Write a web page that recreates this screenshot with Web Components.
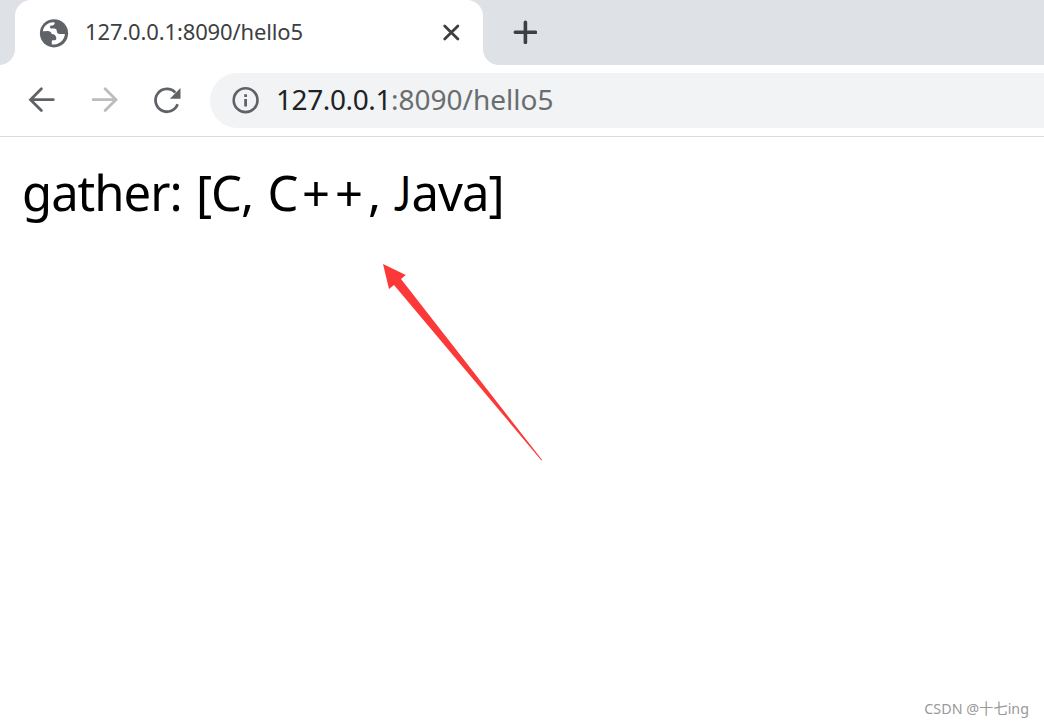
<!DOCTYPE html>
<html lang="en">
<head>
<meta charset="utf-8">
<title>127.0.0.1:8090/hello5</title>
<style>
    body {
        margin: 0;
        background: #fff;
        font-family: "Noto Sans", "Open Sans", "Noto Sans CJK SC", sans-serif;
    }

    .plus {
        margin-left: 4.5px;
        letter-spacing: 5px;
    }

    .cap {
        display: inline-block;
        width: 18px;
        margin-left: -1px;
        font-family: Lato, sans-serif;
        transform: scaleX(0.82);
        transform-origin: left;
    }
</style>
</head>
<body>
<browser-window>
    <browser-tab slot="tabs">127.0.0.1:8090/hello5</browser-tab>
    <browser-toolbar slot="toolbar">
        <address-bar slot="address" host="127.0.0.1">:8090/hello5</address-bar>
    </browser-toolbar>
    <page-view>gather: [C, C<span class="plus">++</span>, <span class="cap">J</span>ava]</page-view>
</browser-window>

<script>
class BrowserWindow extends HTMLElement {
    connectedCallback() {
        this.attachShadow({ mode: 'open' });
        this.shadowRoot.innerHTML = `
            <style>
                :host {
                    display: flex;
                    flex-direction: column;
                    height: 726px;
                    overflow: hidden;
                }

                .strip {
                    display: flex;
                    height: 65px;
                    padding-left: 15px;
                    background: #dee1e6;
                }

                .add {
                    display: block;
                    width: 24px;
                    height: 24px;
                    margin: 20px 0 0 30px;
                }
            </style>
            <div class="strip">
                <slot name="tabs"></slot>
                <svg class="add" viewBox="0 0 24 24" stroke="#3c4043" stroke-width="3.6" stroke-linecap="round">
                    <path d="M2.3 12.3h20.2M12.4 2.2v20.2"/>
                </svg>
            </div>
            <slot name="toolbar"></slot>
            <slot></slot>
        `;
    }
}

class BrowserTab extends HTMLElement {
    connectedCallback() {
        this.attachShadow({ mode: 'open' });
        this.shadowRoot.innerHTML = `
            <style>
                :host {
                    display: flex;
                    align-items: center;
                    position: relative;
                    box-sizing: border-box;
                    width: 468px;
                    height: 65px;
                    padding: 0 22px 0 24px;
                    border-radius: 16px 16px 0 0;
                    background: #fff;
                    color: #3c4043;
                    font-size: 22px;
                }

                /* flared feet of the tab */
                :host::before,
                :host::after {
                    content: '';
                    position: absolute;
                    bottom: 0;
                    width: 16px;
                    height: 16px;
                }

                :host::before {
                    left: -16px;
                    background: radial-gradient(circle at 0 0, #dee1e6 15.5px, #fff 16.5px);
                }

                :host::after {
                    right: -16px;
                    background: radial-gradient(circle at 100% 0, #dee1e6 15.5px, #fff 16.5px);
                }

                .globe {
                    width: 30px;
                    height: 30px;
                    margin-right: 16px;
                }

                .title {
                    flex: 1;
                    padding-bottom: 3px;
                    white-space: nowrap;
                    letter-spacing: -0.14px;
                    line-height: 30px;
                }

                .close {
                    width: 20px;
                    height: 20px;
                }
            </style>
            <svg class="globe" viewBox="0 0 30 30">
                <circle cx="15" cy="15.3" r="14.1" fill="#5f6368"/>
                <path fill="#fff" d="M3.8 13.3C4.6 8.3 8.5 4.7 14.2 4.3c1 0 1.5.2 1.5.8-.1 1.3-.8 2.2-2 2.3h-1.5c-1 .1-1.3.7-1.2 1.9.1 1 .8 1.3 2 1.3h2.2c1.8 0 2.6.9 2.6 2.5 0 1.9.9 2.8 2.7 2.8h4.8c.4 0 .6.2.6.6-.8 5.4-5.1 9.7-10.8 9.9h-2.3v-3.3c0-.6.4-.9 1-.9h1.8c1.2 0 1.7-.6 1.7-1.7 0-3-1.9-4.5-4.6-4.5-.6-2-1.8-2.9-4-2.9z"/>
            </svg>
            <span class="title"><slot></slot></span>
            <svg class="close" viewBox="0 0 20 20" stroke="#3c4043" stroke-width="2.8" stroke-linecap="round">
                <path d="M3.7 2.9l13.2 13.2M16.9 2.9L3.7 16.1"/>
            </svg>
        `;
    }
}

class BrowserToolbar extends HTMLElement {
    connectedCallback() {
        this.attachShadow({ mode: 'open' });
        this.shadowRoot.innerHTML = `
            <style>
                :host {
                    display: flex;
                    align-items: center;
                    box-sizing: border-box;
                    height: 72px;
                    padding: 0 0 1px 26px;
                    border-bottom: 1px solid #dadce0;
                }

                svg {
                    flex: none;
                    width: 32px;
                    height: 32px;
                    margin-right: 31px;
                    fill: none;
                    stroke: #5f6368;
                    stroke-width: 2.8;
                    stroke-linecap: round;
                }

                .forward {
                    stroke: #babcbe;
                }

                .reload {
                    margin-right: 26px;
                    stroke-linecap: butt;
                }
            </style>
            <svg viewBox="0 0 32 32"><path d="M27.3 15.7H4.7M15.4 4.8L4.5 15.7l10.9 10.9"/></svg>
            <svg class="forward" viewBox="0 0 32 32"><path d="M4.2 15.7h22.6M16.1 4.8L27 15.7 16.1 26.6"/></svg>
            <svg class="reload" viewBox="0 0 32 32">
                <path d="M23.3 8.6A11.4 11.4 0 1 0 25.6 20.3"/>
                <path d="M28.5 4v10.8H17.9z" fill="#5f6368" stroke="none"/>
            </svg>
            <slot name="address"></slot>
        `;
    }
}

class AddressBar extends HTMLElement {
    connectedCallback() {
        this.attachShadow({ mode: 'open' });
        this.shadowRoot.innerHTML = `
            <style>
                :host {
                    display: flex;
                    flex: 1;
                    align-items: center;
                    box-sizing: border-box;
                    height: 55px;
                    padding-left: 21px;
                    border-radius: 28px 0 0 28px;
                    background: #f1f3f4;
                    color: #6a6d70;
                    font-size: 28px;
                    line-height: 38px;
                    letter-spacing: 0;
                    white-space: nowrap;
                }

                svg {
                    width: 30px;
                    height: 30px;
                    margin-right: 15px;
                }

                .url {
                    padding-bottom: 2px;
                }

                .host {
                    color: #202124;
                    letter-spacing: -0.4px;
                }
            </style>
            <svg viewBox="0 0 30 30">
                <circle cx="14.6" cy="15.2" r="11.9" fill="none" stroke="#5f6368" stroke-width="2.6"/>
                <path d="M13.2 9.2h2.8v2.7h-2.8zM13.2 13.9h2.8v7.5h-2.8z" fill="#5f6368"/>
            </svg>
            <span class="url"><span class="host">${this.getAttribute('host')}</span><slot></slot></span>
        `;
    }
}

class PageView extends HTMLElement {
    connectedCallback() {
        this.attachShadow({ mode: 'open' });
        this.shadowRoot.innerHTML = `
            <style>
                :host {
                    display: flex;
                    flex: 1;
                    flex-direction: column;
                    justify-content: space-between;
                    position: relative;
                    padding: 23px 15px 7px 22px;
                    color: #000;
                }

                .text {
                    font-size: 49px;
                    line-height: 64px;
                    letter-spacing: -1px;
                    word-spacing: 2.6px;
                    white-space: nowrap;
                }

                .arrow {
                    position: absolute;
                    left: 380px;
                    top: 123px;
                    width: 166px;
                    height: 204px;
                }

                .mark {
                    align-self: flex-end;
                    color: #999;
                    font: 14.3px/20px "Noto Sans", "Noto Sans CJK SC", sans-serif;
                }
            </style>
            <div class="text"><slot></slot></div>
            <svg class="arrow" viewBox="380 260 166 204">
                <path d="M383 264l22.8 11-4.8 4L542.2 460l-.8.5L394 285l-5 4z" fill="#fd3838"/>
            </svg>
            <div class="mark">CSDN @十七ing</div>
        `;
    }
}

customElements.define('browser-window', BrowserWindow);
customElements.define('browser-tab', BrowserTab);
customElements.define('browser-toolbar', BrowserToolbar);
customElements.define('address-bar', AddressBar);
customElements.define('page-view', PageView);
</script>
</body>
</html>
